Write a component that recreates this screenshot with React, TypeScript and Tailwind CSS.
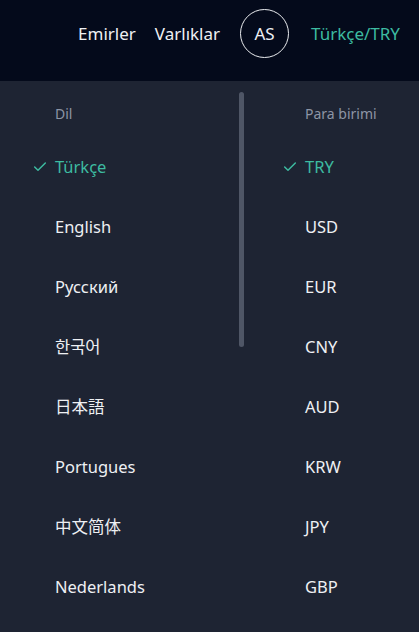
import React from "react";

const langs = ["Türkçe", "English", "Русский", "한국어", "日本語", "Portugues", "中文简体", "Nederlands"];
const curs = ["TRY", "USD", "EUR", "CNY", "AUD", "KRW", "JPY", "GBP"];

function Check() {
  return (
    <svg width="16" height="16" viewBox="0 0 24 24" fill="none" stroke="#3dbba1" strokeWidth="2.2" strokeLinecap="round" strokeLinejoin="round">
      <path d="M20 6 9 17l-5-5" />
    </svg>
  );
}

function Column({ title, items, padLeft }: { title: string; items: string[]; padLeft: string }) {
  return (
    <div className={`flex flex-col ${padLeft}`}>
      <div className="h-[56px] pt-[21px] text-[14px] leading-6 text-[#8d95a5]">{title}</div>
      {items.map((it, i) => (
        <div key={it} className="h-[60px] flex items-center relative">
          {i === 0 && (
            <span className="absolute left-[-23px] top-1/2 -translate-y-1/2 flex">
              <Check />
            </span>
          )}
          <span className={`text-[16.5px] ${i === 0 ? "text-[#3dbba1]" : "text-[#eef0f3]"}`}>{it}</span>
        </div>
      ))}
    </div>
  );
}

export default function App() {
  return (
    <div
      className="w-[419px] h-[632px] overflow-hidden bg-[#1e2433] flex flex-col"
      style={{ fontFamily: '"Noto Sans", "Noto Sans CJK KR", "Noto Sans CJK SC", "Noto Sans CJK JP", sans-serif' }}
    >
      <div className="h-[81px] bg-[#040a1b] flex items-start justify-end pr-[19px] pt-[9px] shrink-0">
        <div className="flex items-center h-[49px] text-[17px] text-[#eef0f3]">
          <span>Emirler</span>
          <span className="ml-[19px]">Varlıklar</span>
          <span className="ml-[20px] w-[49px] h-[49px] rounded-full border border-[#eaecef] flex items-center justify-center">AS</span>
          <span className="ml-[22px] text-[#3dbba1]">Türkçe/TRY</span>
        </div>
      </div>
      <div className="flex flex-1">
        <div className="w-[250px] relative shrink-0">
          <Column title="Dil" items={langs} padLeft="pl-[55px]" />
          <div className="absolute left-[239px] top-[11px] w-[5px] h-[255px] rounded-full bg-[#4f5666]" />
        </div>
        <Column title="Para birimi" items={curs} padLeft="pl-[55px]" />
      </div>
    </div>
  );
}
